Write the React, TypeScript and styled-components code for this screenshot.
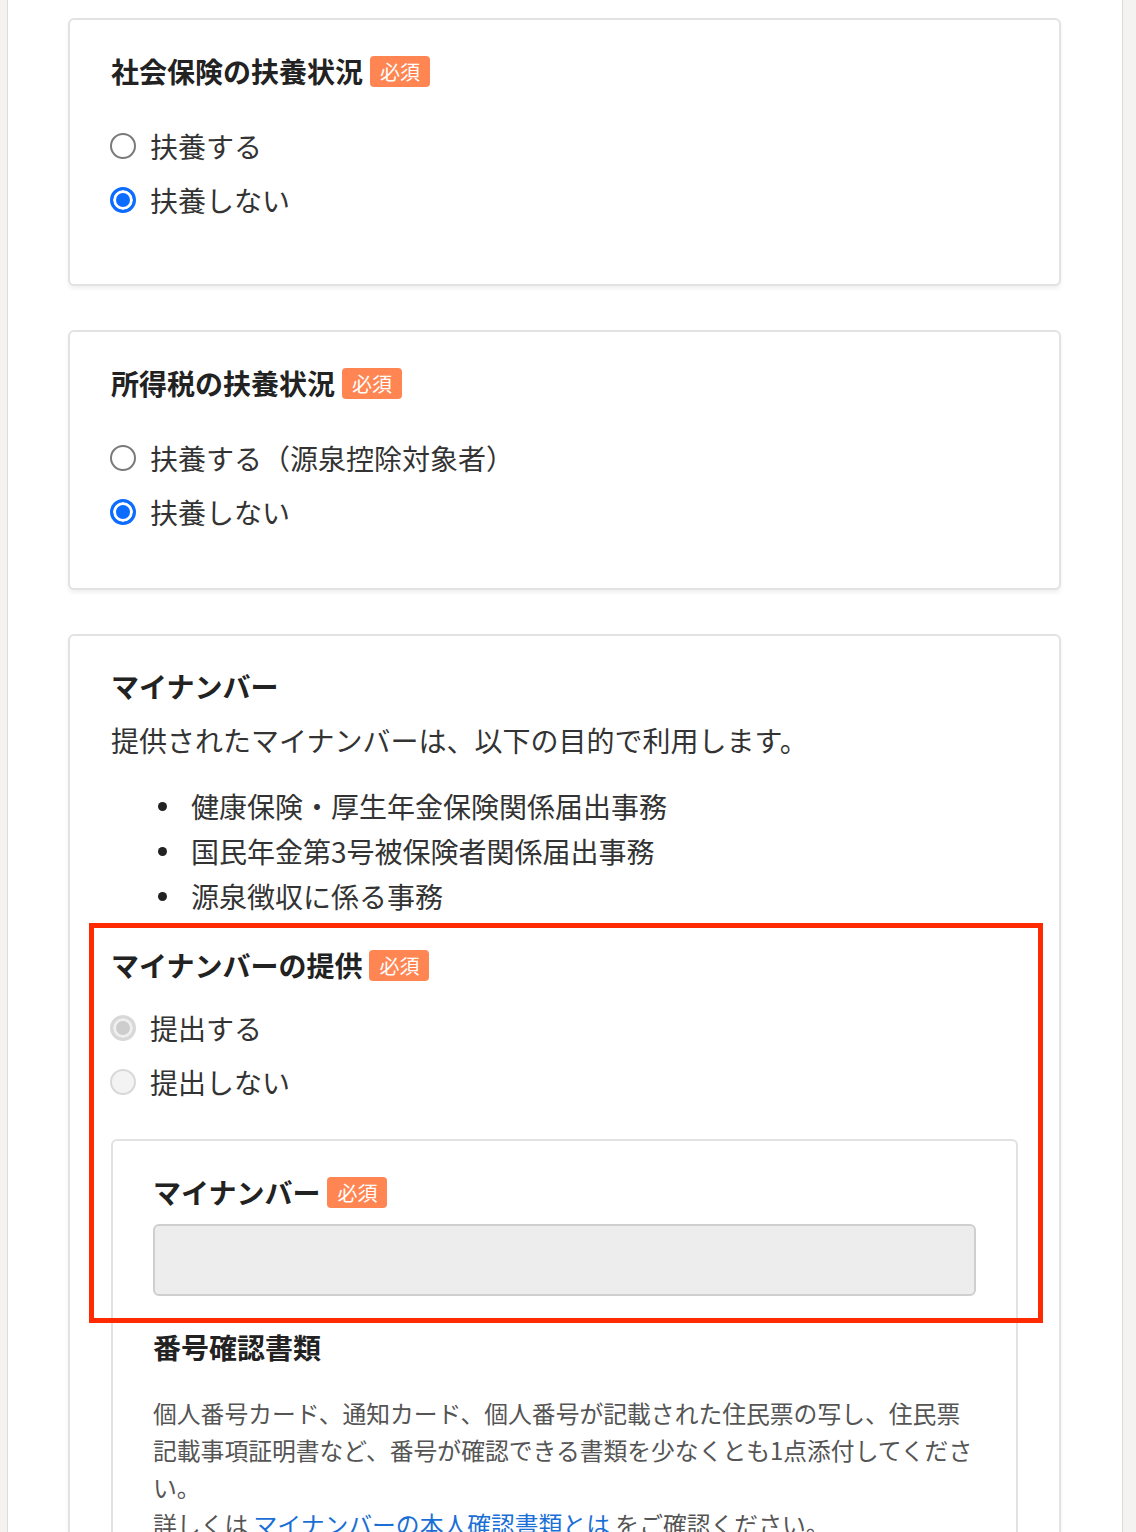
import React from 'react'
import styled, { createGlobalStyle } from 'styled-components'

const GlobalStyle = createGlobalStyle`
  body {
    margin: 0;
    background: #f4f3f1;
    font-family: "Noto Sans CJK JP", "Noto Sans", sans-serif;
    color: #333;
  }
  * {
    box-sizing: border-box;
  }
`

const Page = styled.div`
  width: 1116px;
  min-height: 1532px;
  margin-left: 7px;
  padding: 18px 61px 0 60px;
  background: #fff;
  border-left: 1px solid #dcdcdc;
  border-right: 1px solid #dcdcdc;
`

const Card = styled.section<{ $pb?: number; $pt?: number }>`
  border: 2px solid #e2e2e2;
  border-radius: 6px;
  box-shadow: 0 3px 4px rgba(0, 0, 0, 0.06);
  padding: ${(p) => p.$pt ?? 33}px 41px ${(p) => p.$pb ?? 49}px;
  margin-bottom: 44px;
  background: #fff;
`

const InnerCard = styled.div`
  border: 2px solid #e2e2e2;
  border-bottom: none;
  border-radius: 6px 6px 0 0;
  padding: 33px 40px 40px;
  margin-top: 30px;
`

const Title = styled.h2<{ $mt?: number }>`
  display: flex;
  align-items: center;
  gap: 7px;
  margin: ${(p) => p.$mt ?? 0}px 0 0;
  font-size: 28px;
  line-height: 36px;
  font-weight: 700;
  color: #222;
`

const Badge = styled.span`
  display: inline-block;
  height: 31px;
  line-height: 31px;
  padding: 0 10px;
  border-radius: 4px;
  background: #ff8552;
  color: #fff;
  font-size: 20px;
  font-weight: 400;
`

const RadioList = styled.div<{ $mt: number }>`
  margin-top: ${(p) => p.$mt}px;
`

const RadioRow = styled.label`
  display: flex;
  align-items: center;
  gap: 14px;
  height: 54px;
  font-size: 28px;
  color: #333;
`

const Radio = styled.input.attrs({ type: 'radio' })`
  appearance: none;
  width: 26px;
  height: 26px;
  margin: 0 0 0 -1px;
  border-radius: 50%;
  border: 2px solid #7a7a7a;
  background: #fff;

  &:checked {
    border: 3px solid #0b6cff;
    background: #0b6cff;
    box-shadow: inset 0 0 0 3px #fff;
  }

  &:disabled {
    border: 2px solid #d8d8d8;
    background: #f3f3f3;
  }

  &:disabled:checked {
    border: 3px solid #d8d8d8;
    background: #cdcdcd;
    box-shadow: inset 0 0 0 3px #efefef;
  }
`

const Desc = styled.p`
  margin: 16px 0 0;
  font-size: 28px;
  line-height: 40px;
  color: #333;
`

const List = styled.ul`
  margin: 24px 0 0;
  padding: 0;
  list-style: none;
`

const Item = styled.li`
  display: flex;
  align-items: center;
  font-size: 28px;
  line-height: 45px;
  color: #333;

  &::before {
    content: '';
    width: 9px;
    height: 9px;
    border-radius: 50%;
    background: #222;
    margin: 0 24px 0 47px;
    flex: none;
  }
`

const Highlight = styled.div`
  position: relative;
  margin-top: 28px;
`

const RedFrame = styled.div`
  position: absolute;
  top: -24px;
  left: -22px;
  right: -25px;
  height: 400px;
  border: 5px solid #ff2a00;
  pointer-events: none;
`

const NumberInput = styled.input`
  display: block;
  width: 100%;
  height: 72px;
  margin-top: 14px;
  border: 2px solid #cfcfcf;
  border-radius: 6px;
  background: #ededed;
`

const Note = styled.p`
  margin: 29px 0 0;
  font-size: 23.8px;
  line-height: 37px;
  color: #555;
  white-space: nowrap;
`

const DocLink = styled.a`
  color: #1a6fd6;
  text-decoration: none;
`

const RadioGroup = ({ name, options, checked, disabled, mt }: any) => (
  <RadioList $mt={mt}>
    {options.map((o: string, i: number) => (
      <RadioRow key={o}>
        <Radio name={name} defaultChecked={i === checked} disabled={disabled} />
        {o}
      </RadioRow>
    ))}
  </RadioList>
)

export default function App() {
  return (
    <>
      <GlobalStyle />
      <Page>
        <Card $pb={57}>
          <Title>
            社会保険の扶養状況<Badge>必須</Badge>
          </Title>
          <RadioGroup name="social" options={['扶養する', '扶養しない']} checked={1} mt={30} />
        </Card>

        <Card>
          <Title>
            所得税の扶養状況<Badge>必須</Badge>
          </Title>
          <RadioGroup name="tax" options={['扶養する（源泉控除対象者）', '扶養しない']} checked={1} mt={30} />
        </Card>

        <Card $pt={32} $pb={0}>
          <Title>マイナンバー</Title>
          <Desc>提供されたマイナンバーは、以下の目的で利用します。</Desc>
          <List>
            <Item>健康保険・厚生年金保険関係届出事務</Item>
            <Item>国民年金第3号被保険者関係届出事務</Item>
            <Item>源泉徴収に係る事務</Item>
          </List>

          <Highlight>
            <Title>
              マイナンバーの提供<Badge>必須</Badge>
            </Title>
            <RadioGroup name="provide" options={['提出する', '提出しない']} checked={0} disabled mt={18} />

            <InnerCard>
              <Title>
                マイナンバー<Badge>必須</Badge>
              </Title>
              <NumberInput disabled />

              <Title $mt={33}>番号確認書類</Title>
              <Note>
                個人番号カード、通知カード、個人番号が記載された住民票の写し、住民票
                <br />
                記載事項証明書など、番号が確認できる書類を少なくとも1点添付してくださ
                <br />
                い。
                <br />
                詳しくは <DocLink href="#">マイナンバーの本人確認書類とは</DocLink> をご確認ください。
              </Note>
            </InnerCard>
            <RedFrame />
          </Highlight>
        </Card>
      </Page>
    </>
  )
}
